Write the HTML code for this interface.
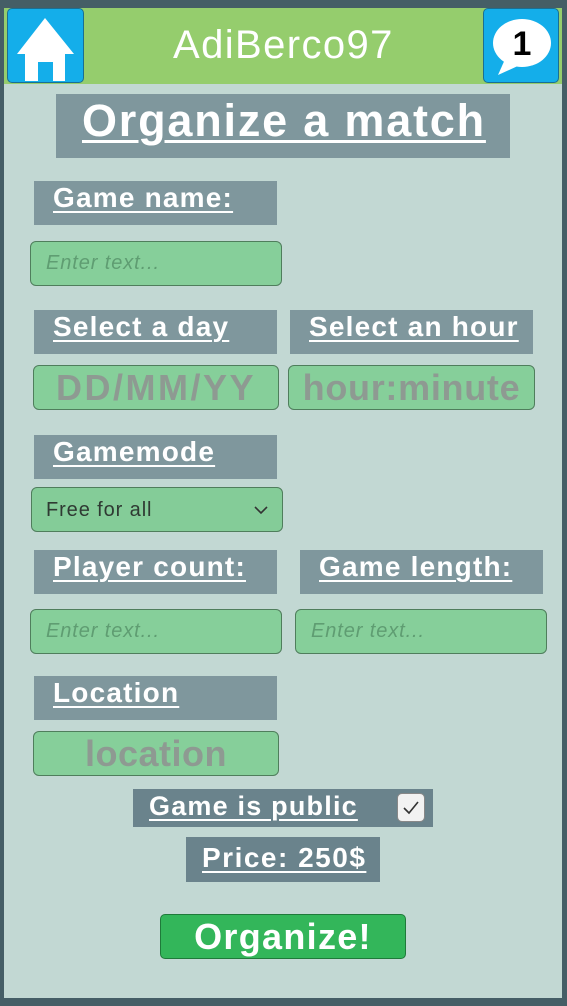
<!DOCTYPE html>
<html><head><meta charset="utf-8"><style>
*{margin:0;padding:0;box-sizing:border-box}
body{width:567px;height:1006px;background:#455e66;position:relative;overflow:hidden;font-family:"Liberation Sans",sans-serif}
.a{position:absolute}
.panel{left:4px;top:8px;width:558px;height:990px;background:#c2d8d3}
.hdr{left:4px;top:8px;width:558px;height:76px;background:#95cd6d}
.btn{background:#14aeea;border:1px solid #1a6f93;border-radius:5px}
.lbl{background:#7f979d;color:#fff;font-weight:bold;font-size:28px;letter-spacing:1.2px;text-decoration:underline;text-decoration-thickness:2px;text-underline-offset:4px;padding-left:19px;line-height:34px;white-space:nowrap}
.inp{background:#86cf9a;border:1px solid #4f7e5c;border-radius:6px;white-space:nowrap}
.ph{color:#5f9d72;font-style:italic;font-size:20px;letter-spacing:0.9px;line-height:43px;padding-left:15px}
.big{color:#8e9a92;font-weight:bold;font-size:36px;line-height:43px;text-align:center}
</style></head><body>
<div class="a panel"></div>
<div class="a hdr"></div>
<div class="a btn" style="left:7px;top:8px;width:77px;height:75px">
<svg width="77" height="75" viewBox="0 0 77 75"><path d="M37 9 L9 45 H17 V72 H30 V53 H45 V72 H57 V45 H66 Z" fill="#fff"/></svg></div>
<div class="a" style="left:173px;top:20px;font-size:40px;letter-spacing:1.4px;color:#fff;line-height:50px">AdiBerco97</div>
<div class="a btn" style="left:483px;top:8px;width:76px;height:75px">
<svg width="76" height="75" viewBox="0 0 76 75"><ellipse cx="38" cy="34" rx="29" ry="24" fill="#fff"/><path d="M14 66 L22 48 L36 56 Z" fill="#fff"/><text x="38" y="46" font-family="Liberation Sans" font-weight="bold" font-size="34" text-anchor="middle" fill="#000">1</text></svg></div>
<div class="a lbl" style="left:56px;top:94px;width:454px;height:64px;font-size:45px;letter-spacing:1.8px;line-height:54px;padding-left:26px;text-decoration-thickness:3px">Organize a match</div>
<div class="a lbl" style="left:34px;top:181px;width:243px;height:44px">Game name:</div>
<div class="a inp ph" style="left:30px;top:241px;width:252px;height:45px">Enter text...</div>
<div class="a lbl" style="left:34px;top:310px;width:243px;height:44px">Select a day</div>
<div class="a lbl" style="left:290px;top:310px;width:243px;height:44px">Select an hour</div>
<div class="a inp big" style="left:33px;top:365px;width:246px;height:45px;letter-spacing:2.5px">DD/MM/YY</div>
<div class="a inp big" style="left:288px;top:365px;width:247px;height:45px;letter-spacing:0.7px">hour:minute</div>
<div class="a lbl" style="left:34px;top:435px;width:243px;height:44px">Gamemode</div>
<div class="a inp" style="left:31px;top:487px;width:252px;height:45px;background:#84cc98;font-size:20px;letter-spacing:0.9px;color:#2f3a33;line-height:45px;padding-left:14px">Free for all
<svg class="a" style="left:222px;top:17px" width="14" height="10" viewBox="0 0 14 10"><path d="M1 2 L7 8 L13 2" stroke="#333" stroke-width="1.6" fill="none"/></svg></div>
<div class="a lbl" style="left:34px;top:550px;width:243px;height:44px">Player count:</div>
<div class="a lbl" style="left:300px;top:550px;width:243px;height:44px">Game length:</div>
<div class="a inp ph" style="left:30px;top:609px;width:252px;height:45px">Enter text...</div>
<div class="a inp ph" style="left:295px;top:609px;width:252px;height:45px">Enter text...</div>
<div class="a lbl" style="left:34px;top:676px;width:243px;height:44px">Location</div>
<div class="a inp big" style="left:33px;top:731px;width:246px;height:45px;letter-spacing:0.5px">location</div>
<div class="a lbl" style="left:133px;top:789px;width:300px;height:38px;background:#6a838c;line-height:34px;padding-left:16px;font-size:27px">Game is public</div>
<div class="a" style="left:397px;top:793px;width:28px;height:29px;background:#f2f2f2;border:1px solid #888;border-radius:5px">
<svg width="26" height="27" viewBox="0 0 26 27"><path d="M6 14 L11 19 L20 8" stroke="#333" stroke-width="1.6" fill="none"/></svg></div>
<div class="a lbl" style="left:186px;top:837px;width:194px;height:45px;background:#6a838c;line-height:42px;padding-left:16px;letter-spacing:1.5px">Price: 250$</div>
<div class="a" style="left:160px;top:914px;width:246px;height:45px;background:#33b65a;border:1px solid #1f7a3a;border-radius:5px;color:#fff;font-weight:bold;font-size:36px;letter-spacing:1.3px;text-align:center;line-height:44px">Organize!</div>
</body></html>
